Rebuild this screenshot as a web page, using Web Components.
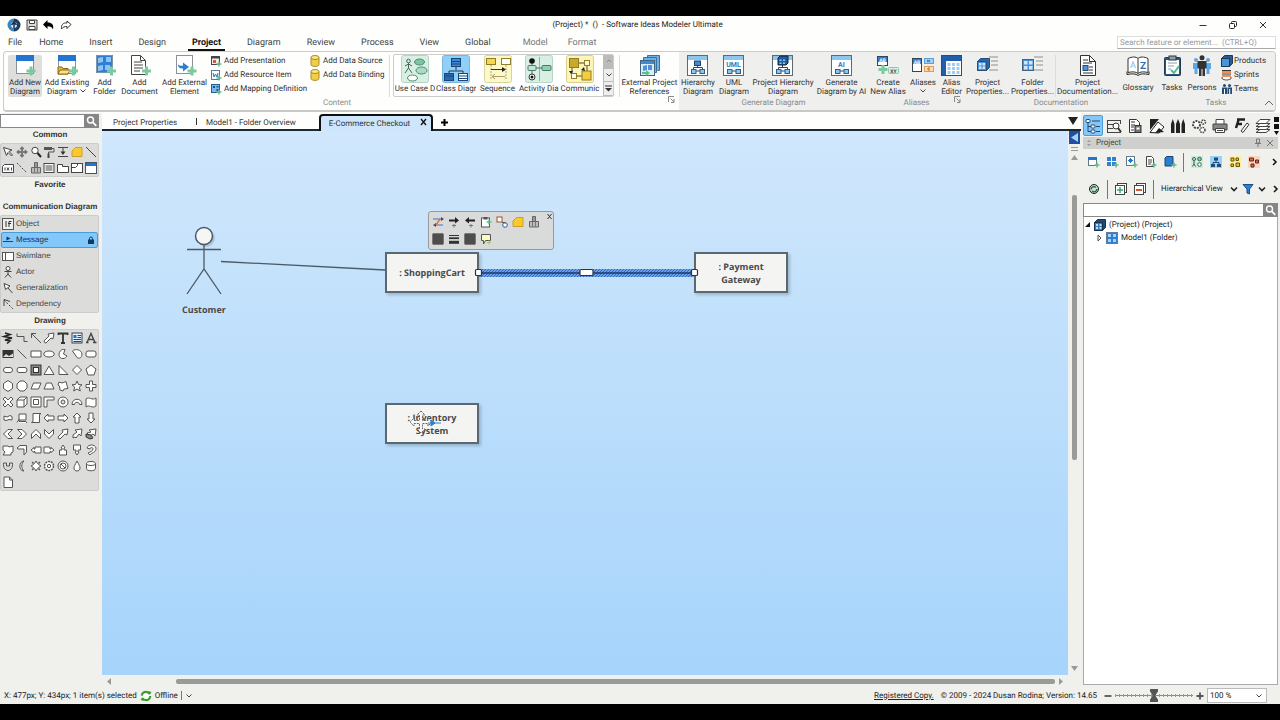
<!DOCTYPE html>
<html lang="en">
<head>
<meta charset="utf-8">
<title>Software Ideas Modeler Ultimate</title>
<style>
html, body { margin: 0; height: 100%; }
body { background: #000; font: 8px/10px Roboto, "Open Sans", sans-serif; color: #333; text-rendering: geometricPrecision; }
</style>
</head>
<body>
<sim-app></sim-app>
<script>
/* ---------- icon library ---------- */
const PLUS = (x, y) => `<path d="M${x} ${y - 4.5}v9M${x - 4.5} ${y}h9" stroke="#7cc9a0" stroke-width="3" fill="none"/>`;
const plus = (x, y) => `<path d="M${x} ${y - 2.5}v5M${x - 2.5} ${y}h5" stroke="#63bd8b" stroke-width="1.5" fill="none"/>`;
const WIN = `<rect x="2.5" y=".5" width="17" height="18" fill="#fff" stroke="#8a9299"/><path d="M2 0h18v6H2z" fill="#2374cf"/>`;
const DGM = `<rect x=".5" y=".5" width="20" height="20" fill="#fff" stroke="#5a6a78"/><path d="M1 1h19v4H1z" fill="#8fc6ee"/>`;
const PAIR = `<path d="M9 16h4" stroke="#345"/><rect x="4.500" y="14.500" width="4.500" height="4" fill="#8fc6ee" stroke="#2c5f8d"/><rect x="13" y="14.500" width="4.500" height="4" fill="#8fc6ee" stroke="#2c5f8d"/>`;
const CUBE = `<path d="M.5 3.500l3-3h8v8l-3 3h-8z" fill="#245c96" stroke="#1e3a55"/><rect x=".5" y="3.500" width="8" height="8" fill="#4a94dc" stroke="#1e3a55"/>`;
const GRID4 = (x, y, s, f) => `<rect x="${x}" y="${y}" width="${s}" height="${s}" fill="${f}"/><path d="M${x + s / 2} ${y}v${s}M${x} ${y + s / 2}h${s}" stroke="#fff" stroke-width="1"/>`;
const DB = `<path d="M1 2.500v7c0 2.500 8 2.500 8 0v-7z" fill="#f0cf45" stroke="#ab8b22"/><ellipse cx="5" cy="2.500" rx="4" ry="2" fill="#fbe88a" stroke="#ab8b22"/>`;
const PROPS = `<path d="M12 2h9M14 6h7M14 10h7M12 15h9" stroke="#8a8f94"/>`;
const I = {
  logo: [14, 14, `<circle cx="7" cy="7" r="6" fill="#e8f1f8"/><path d="M7 .5A6.500 6.500 0 0 1 7 13.500V10a3 3 0 0 0 0-6z" fill="#1f3c60"/><path d="M7 .5A6.500 6.500 0 0 0 7 13.500V10a3 3 0 0 1 0-6z" fill="#3886be"/><path d="M7 4v6M4.500 7L7 4l2.500 3" stroke="#16324f" stroke-width="1.500" fill="none"/>`],
  save: [12, 12, `<path d="M1 1h10v10H1z" fill="#ddd" stroke="#444"/><path d="M3.500 1.500h5v3h-5zM3 7.500h6v3H3z" fill="#fff" stroke="#444"/>`],
  undo: [12, 10, `<path d="M4.500 0v2.500C9 2.500 11 4.500 10 9.500 9 7 7.500 6.200 4.500 6.200V9L0 4.500z" fill="#000"/>`],
  redo: [12, 10, `<path d="M7 1v2C3 2.500 1 5 1.500 9 3 7 4.500 6.500 7 6.500V8.500L11 4.500z" fill="#fff" stroke="#333"/>`],
  wmin: [10, 10, `<path d="M1.500 5.500h7" stroke="#333"/>`],
  wmax: [10, 10, `<rect x="1.500" y="3.500" width="5" height="5" rx="1" fill="none" stroke="#222"/><path d="M3.500 3.500v-1a1 1 0 0 1 1-1h3a1 1 0 0 1 1 1v3a1 1 0 0 1-1 1h-1" fill="none" stroke="#222"/>`],
  wclose: [10, 10, `<path d="M2 2l6 6M8 2L2 8" stroke="#333"/>`],
  search: [13, 13, `<circle cx="5.500" cy="5" r="3" fill="none" stroke="#fff" stroke-width="1.400"/><path d="M7.800 7.300l3.500 3.500" stroke="#fff" stroke-width="1.800"/>`],
  chev: [8, 6, `<path d="M1.500 1.500L4 4l2.500-2.500" fill="none" stroke="#444"/>`],
  chevb: [8, 6, `<path d="M1 1.500L4 4.500l3-3" fill="none" stroke="#222" stroke-width="1.600"/>`],
  more: [5, 8, `<path d="M1 1l3 3-3 3" fill="none" stroke="#111" stroke-width="1.500"/>`],
  collapse: [10, 6, `<path d="M1 5l4-4 4 4" fill="none" stroke="#666"/>`],
  launcher: [7, 7, `<path d="M6 .5H.5V6M2.500 2.500L6 6M6 3v3.500H3" fill="none" stroke="#888"/>`],
  newdiag: [22, 22, WIN + PLUS(17, 16)],
  exist: [22, 22, WIN + `<path d="M2 19v-7h4l1 1.500h5V19z" fill="#e8b93a" stroke="#8c6a12"/><path d="M2 19l2-4h10l-2 4z" fill="#ffe389" stroke="#8c6a12"/>` + PLUS(17.5, 16)],
  folder: [22, 22, `<rect x="2" y="0" width="17" height="18" fill="#2f80d4"/><path d="M2.500.5h16v17h-16z" fill="none" stroke="#7b93a9"/><path d="M4 3l5-1v5l-5 1zM12 2h5v5h-5zM4 11l5-1v5l-5 1zM11 10h5v5h-5z" fill="#8fc3f3"/>` + PLUS(17.5, 16)],
  document: [22, 22, `<path d="M2.500.5h9l5 5v14h-14z" fill="#fff" stroke="#444"/><path d="M11.500.5v5h5" fill="none" stroke="#444"/><path d="M5 7h8M5 10h9M5 13h9M5 16h6" stroke="#444"/>` + PLUS(17.5, 16)],
  external: [22, 22, `<rect x="2.500" y=".5" width="16" height="18" fill="#fff" stroke="#8a9299"/><path d="M4 9.500c2 1.500 3 1.500 5 1v-3l6 4.500-6 4.500v-3c-3 .5-5-1-5-4z" fill="#2a7fd0"/>` + PLUS(18, 16)],
  pres: [10, 10, `<rect x=".5" y=".5" width="8" height="8" fill="#eee" stroke="#444"/><path d="M0 0h9v2.500H0z" fill="#444"/><path d="M2 4h3v3H2z" fill="#d95b32"/>` + plus(8, 8)],
  res: [10, 10, `<rect x=".5" y=".5" width="8" height="9" fill="#fff" stroke="#678"/><path d="M2 3l1 4 1.500-3L6 7l1-4" fill="none" stroke="#2374cf"/>` + plus(8, 8)],
  map: [10, 10, `<rect x=".5" y=".5" width="8" height="8" fill="#7ab8ee" stroke="#245c96"/><path d="M2 2h2v2H2zM5.500 5h2v2h-2zM5.500 2h2v1.500h-2z" fill="#1d4f86"/>` + plus(8, 8)],
  db: [10, 12, DB],
  gUse: [28, 28, `<rect x=".5" y=".5" width="27" height="27" rx="2" fill="#d8efe4" stroke="#b8d4c6"/><circle cx="7.500" cy="6" r="1.800" fill="none" stroke="#465"/><path d="M7.500 8v5M4 11l3.500-2 3.500 2M4 18l3.500-5 3.500 5" fill="none" stroke="#465"/><ellipse cx="18.500" cy="7" rx="5" ry="3" fill="#7cc5a2" stroke="#4b8b6c"/><ellipse cx="20.500" cy="15.500" rx="5.500" ry="3.500" fill="#a9dcc3" stroke="#4b8b6c"/><ellipse cx="11.500" cy="23" rx="5" ry="3" fill="#fff" stroke="#4b8b6c"/>`],
  gClass: [28, 28, `<rect x=".5" y=".5" width="27" height="27" rx="2" fill="#8fd0fb" stroke="#79b6de"/><path d="M14 11v4M7 18v-2h14v2" stroke="#234" fill="none"/><rect x="9.500" y="3.500" width="9" height="8" fill="#3e8ad6" stroke="#1b4777"/><rect x="2.500" y="18.500" width="9" height="7" fill="#2769b5" stroke="#1b4777"/><rect x="16.500" y="18.500" width="9" height="7" fill="#fff" stroke="#1b4777"/><path d="M9.500 6.500h9M9.500 9h9M2.500 21h9M16.500 21h9M16.500 23.500h9" stroke="#1b4777"/>`],
  gSeq: [28, 28, `<rect x=".5" y=".5" width="27" height="27" rx="2" fill="#fdf8c8" stroke="#d9d49c"/><path d="M7 10v15M22 10v15" stroke="#aaa57a" stroke-dasharray="2 1"/><rect x="2.500" y="3.500" width="9" height="6" fill="#f5d84e" stroke="#8f7c24"/><rect x="17.500" y="3.500" width="9" height="6" fill="#fff" stroke="#8f7c24"/><path d="M7 14.500h13" stroke="#333"/><path d="M8 21.500h13" stroke="#a99f6a"/><path d="M18 12l4 2.500-4 2.500z" fill="#222"/><path d="M11 19l-3 2.500 3 2.500" fill="none" stroke="#a99f6a"/>`],
  gAct: [28, 28, `<rect x=".5" y=".5" width="27" height="27" rx="2" fill="#d8efe4" stroke="#b8d4c6"/><path d="M14.500 2v24" stroke="#9ab"/><path d="M7 6v16M7 13h14" stroke="#567" fill="none"/><circle cx="7" cy="6" r="2.800" fill="#111"/><rect x="3" y="10.500" width="8" height="5" rx="1" fill="#bfe6d2" stroke="#4b7b66"/><rect x="17" y="10.500" width="9" height="5" rx="1" fill="#8fd0b0" stroke="#4b7b66"/><circle cx="7" cy="22" r="3" fill="#fff" stroke="#333"/><circle cx="7" cy="22" r="1.500" fill="#111"/>`],
  gCom: [28, 28, `<rect x=".5" y=".5" width="27" height="27" rx="2" fill="#fdf5b4" stroke="#d9cf8c"/><path d="M13 8h6M6 12v7M11 21h5M21 11v5" stroke="#444" fill="none"/><rect x="3.500" y="3.500" width="9" height="9" fill="#c9a92c" stroke="#8f7c24"/><rect x="18.500" y="5.500" width="5" height="5" fill="#fff9cc" stroke="#8f7c24"/><rect x="5.500" y="18.500" width="5" height="5" fill="#fff" stroke="#8f7c24"/><rect x="16" y="16" width="9" height="9" fill="#f3cc3f" stroke="#8f7c24"/><path d="M15 15l3-3 1 4zM3 16l2 3 2-3z" fill="#222"/>`],
  extref: [22, 22, `<path d="M8.500 2.500v-2h12v15h-2M4.500 5v-2.500h13v15h-2" fill="#6fb0e6" stroke="#3d6f9d"/><rect x="1.500" y="5.500" width="14" height="15" fill="#dcedfa" stroke="#44637f"/><path d="M2 6h13v3H2z" fill="#3e8ad6"/><path d="M4 11l4-1v5l-4 1zM9 10h4v5H9z" fill="#4a94dc"/><path d="M3 17h4v-2l4 3-4 3v-2H3z" fill="#63bd8b"/>`],
  hier: [22, 22, DGM + `<path d="M10.500 9v4M6.500 15v-2.500h9V15" fill="none" stroke="#345"/><rect x="7.500" y="6" width="6" height="4.500" fill="#3e8ad6" stroke="#1b4777"/>` + PAIR],
  uml: [22, 22, DGM + PAIR + `<text x="10.500" y="12" text-anchor="middle" font-size="7" font-weight="700" fill="#3a78b4">UML</text>`],
  phd: [22, 22, DGM + `<path d="M10.500 9v4M6.500 15v-2.500h9V15" fill="none" stroke="#345"/><path d="M6 3l2-2h8v7l-2 2H6z" fill="#1f5da5" stroke="#123"/><path d="M7.500 4.500h2v1.500h-2zM11 4.500h2v1.500h-2zM7.500 7.500h2v1.500h-2zM11 7.500h2v1.500h-2z" fill="#8fc6ee"/>` + PAIR],
  ai: [22, 22, DGM + PAIR + `<text x="10.500" y="12" text-anchor="middle" font-size="7" font-weight="700" fill="#3a78b4">AI</text>`],
  alias: [22, 22, `<rect x=".5" y="1.500" width="10" height="9" fill="#fff" stroke="#345"/><path d="M1 2h9v5H1z" fill="#2f80d4"/><text x="5.500" y="6.700" text-anchor="middle" font-size="5" font-weight="700" fill="#fff">AB</text><rect x="11.500" y="12.500" width="10" height="6" rx="1" fill="#d6efe2" stroke="#8bc7a7"/><text x="16.500" y="17.500" text-anchor="middle" font-size="5" font-weight="700" fill="#345">XY</text><path d="M6 10v9M1.500 14.500h9" stroke="#7cc9a0" stroke-width="3"/>`],
  aliases: [22, 22, `<rect x=".5" y="3.500" width="9" height="13" fill="#fff" stroke="#345"/><path d="M1 4h8v5H1z" fill="#2f80d4"/><text x="5" y="8.500" text-anchor="middle" font-size="5" font-weight="700" fill="#fff">AB</text><rect x="12.500" y="3.500" width="9" height="5" fill="#9fd0f6" stroke="#5d9fd6"/><rect x="12.500" y="11.500" width="9" height="5" fill="#fbdcb8" stroke="#e39a52"/><path d="M15 5l3 2M18 5l-3 2" stroke="#3a78b4"/><path d="M18 13h-2v2h2" fill="none" stroke="#c56a1c"/>`],
  aled: [22, 22, `<rect x=".5" y=".5" width="20" height="20" fill="#fff" stroke="#2c4c70"/><path d="M1 1h19v5H1zM1 6h4v14H1z" fill="#1f5fae"/><path d="M6.500 8h3v3h-3zM11 8h3v3h-3zM15.500 8h3v3h-3zM6.500 12h3v3h-3zM11 12h3v3h-3zM15.500 12h3v3h-3zM6.500 16h3v3h-3zM11 16h3v3h-3zM15.500 16h3v3h-3z" fill="#9fcdf3"/>`],
  pprops: [22, 22, PROPS + `<path d="M.5 6.500l3-3h9v9l-3 3h-9z" fill="#2a68aa" stroke="#2b4d70"/><path d="M.5 6.500h9v9h-9z" fill="#4a94dc" stroke="#2b4d70"/><path d="M2 8h2.500v2.500H2zM5.500 8H8v2.500H5.500zM2 11.500h2.500V14H2zM5.500 11.500H8V14H5.500z" fill="#cfe6fa"/>`],
  fprops: [22, 22, PROPS + `<rect x=".5" y="4.500" width="11" height="11" fill="#4a94dc" stroke="#44637f"/><path d="M2 6h3.500v3.500H2zM7 6h3.500v3.500H7zM2 11h3.500v3.500H2zM7 11h3.500v3.500H7z" fill="#cfe6fa"/>`],
  pdoc: [22, 22, `<path d="M3.500.5h9l6 6v14h-15z" fill="#fff" stroke="#333"/><path d="M12.500.5v6h6" fill="none" stroke="#333"/><path d="M6 5h5M6 8h9M12 12h4M12 15h4M6 18h10" stroke="#333"/><rect x="6" y="10.500" width="5" height="5" fill="#4a94dc" stroke="#2b4d70"/>`],
  gloss: [22, 22, `<path d="M1 3.500c4-2 8-2 10 0 2-2 6-2 10 0v14c-4-1-8-1-10 1-2-2-6-2-10-1z" fill="#fff" stroke="#333"/><path d="M11 3.500v15" stroke="#333"/><path d="M0 16.500v3c5-1 9-1 11 1 2-2 6-2 11-1v-3" fill="none" stroke="#222"/><text x="6" y="13" text-anchor="middle" font-size="9" fill="#7fb8e6">A</text><text x="16" y="14" text-anchor="middle" font-size="10" font-weight="700" fill="#2a70b8">Z</text>`],
  tasks: [22, 22, `<rect x="3.500" y="2.500" width="16" height="18" rx="1" fill="#2e567f" stroke="#1d3a58"/><path d="M5 5h13v14H5z" fill="#fff"/><rect x="8" y="1" width="7" height="4" fill="#8ba0b5" stroke="#333"/><path d="M7 8h9M7 11h6M7 14h3" stroke="#8ba0b5"/><path d="M10 15l3 3 5-7" fill="none" stroke="#58b987" stroke-width="2"/>`],
  persons: [22, 22, `<g fill="#5fa6e6"><circle cx="5" cy="5" r="2"/><path d="M2 8h6v6H6.500v5h-3v-5H2z"/><circle cx="17" cy="5" r="2"/><path d="M14 8h6v6h-1.500v5h-3v-5H14z"/></g><circle cx="11" cy="2.800" r="2.500" fill="#333"/><path d="M6.500 6h9v7H14v8h-2.500v-7h-1v7H8v-8H6.500z" fill="#333"/>`],
  cube: [12, 12, CUBE],
  sprints: [12, 12, `<path d="M1 1.500h9M1 5h9" stroke="#333"/><path d="M1 2h9v2.500H1zM1 6h9v2H1z" fill="#ef8f57"/><path d="M1 8v1.500c3 2 6 2 9 0V8" fill="#fff" stroke="#444"/>`],
  teams: [12, 12, `<g fill="#234a73"><circle cx="3.500" cy="2.500" r="1.500"/><path d="M1 4.500h5V11H1z"/><circle cx="8.500" cy="2.500" r="1.500"/><path d="M6.500 4.500h4.500V11H6.500z"/></g><path d="M3.500 6v5M8.700 6v5" stroke="#fff"/>`],
  /* palette: common */
  cursor: [12, 12, `<path d="M1.500 1.500l3 8 1.500-3 3.500 3.500 1-1L7 5.500l3-1.500z" fill="#fff" stroke="#444"/>`],
  move: [12, 12, `<path d="M6 .5l2 2.500H6.500v2.500H9V4l2.500 2L9 8V6.500H6.500V9H8l-2 2.500L4 9h1.500V6.500H3V8L.5 6 3 4v1.500h2.500V3H4z" fill="#777" stroke="#555" stroke-width=".5"/>`],
  zoomi: [12, 12, `<circle cx="5" cy="4.500" r="3.200" fill="#fff" stroke="#444"/><path d="M7.500 7l3.500 4" stroke="#222" stroke-width="2"/>`],
  roller: [12, 12, `<path d="M1 1h8v3H1z" fill="#555"/><path d="M9 2.500h2v3.500H5.500V8" fill="none" stroke="#555"/><path d="M4.500 7.500h2V12h-2z" fill="#444"/>`],
  space: [12, 12, `<path d="M1 1.500h10M1 10.500h10M6 2v6" stroke="#444"/><path d="M3.500 5.500L6 9l2.500-3.500z" fill="#333"/>`],
  note: [12, 12, `<path d="M1 10.500V5l3.500-3.500H11v9z" fill="#fcc92d" stroke="#caa02a"/>`],
  line: [12, 12, `<path d="M1 1l10 10" stroke="#444"/>`],
  nameb: [12, 12, `<path d="M.5 10.500v-6l2-2h9v8z" fill="#fff" stroke="#444"/><path d="M3 5.500v3M5 5.500l2 3M7 5.500l-2 3M9.500 5.500v3" stroke="#444"/>`],
  dots: [12, 12, `<path d="M1 1l10 10" stroke="#444" stroke-dasharray="2 1.500"/>`],
  stamp: [12, 12, `<path d="M1.500 5.500h9V11h-9z" fill="#bbb" stroke="#666"/><path d="M4.500.5h3v5h-3z" fill="#999" stroke="#666"/><path d="M4.500 6v5M7.500 6v5" stroke="#777"/>`],
  list: [12, 12, `<rect x="1" y="1.500" width="10" height="9" fill="#fff" stroke="#444"/><path d="M2.500 4h7M2.500 6h7M2.500 8h7" stroke="#444"/>`],
  fold: [12, 12, `<path d="M.5 10.500v-8h5v2h6v6z" fill="#fff" stroke="#444"/>`],
  frame: [12, 12, `<rect x=".5" y="1.500" width="11" height="9" fill="#fff" stroke="#444"/><path d="M.5 5.500h4l2-2v-2" fill="none" stroke="#444"/>`],
  winb: [12, 12, `<rect x=".5" y=".5" width="11" height="11" fill="#fff" stroke="#456"/><path d="M1 1h10v3H1z" fill="#2374cf"/>`],
  obj: [12, 12, `<rect x=".5" y=".5" width="11" height="11" fill="#eee" stroke="#555"/><path d="M4 3v6M7 9V3.500h2.500M6 5.500h3" stroke="#333" fill="none"/>`],
  msg: [12, 12, `<path d="M1 7.500h10" stroke="#246"/><path d="M4.500 2.500L8.500 4.500l-4 2z" fill="#123a66"/>`],
  swim: [12, 12, `<rect x=".5" y="2.500" width="11" height="8" fill="#fff" stroke="#555"/><path d="M3.500 2.500v8" stroke="#555"/>`],
  actor: [12, 12, `<circle cx="6" cy="2.500" r="2" fill="#fff" stroke="#444"/><path d="M6 4.500V8M2.500 5.500h7M3 11.500L6 8l3 3.500" fill="none" stroke="#444"/>`],
  gen: [12, 12, `<path d="M2 1.500l1.500 6L8 4zM6 6l4.500 5" fill="#fff" stroke="#444"/>`],
  dep: [12, 12, `<path d="M2 8V1.500L8 3.500" fill="none" stroke="#444"/><path d="M2 2l9 9" stroke="#444" stroke-dasharray="2 1.500"/>`],
  lock: [8, 8, `<path d="M2.500 4V2.500a1.500 1.500 0 0 1 3 0V4" fill="none" stroke="#123a66"/><path d="M1 3.500h6V8H1z" fill="#123a66"/>`],
  /* right panel tabs */
  tTree: [16, 16, `<rect x="1" y="1.500" width="4" height="3" rx="1" fill="#fff" stroke="#234a73"/><path d="M3 4.500v9h3M3 8.500h3M7 3h8M11 8.500h4M11 13.500h4" fill="none" stroke="#234a73"/><rect x="6" y="7" width="4" height="3" rx="1" fill="#fff" stroke="#234a73"/><rect x="6" y="12" width="4" height="3" rx="1" fill="#fff" stroke="#234a73"/>`],
  tFind: [16, 16, `<path d="M1 2.500h14M1 6.500h6M1 10.500h6M1 14.500h14M1.500 2v12M14.500 2v4" stroke="#444"/><circle cx="10" cy="8" r="3" fill="#fff" stroke="#333"/><path d="M12 10l3 4" stroke="#333" stroke-width="2"/>`],
  tDoc: [16, 16, `<path d="M2.500 1.500h7l3 3v10h-10z" fill="#fff" stroke="#333"/><path d="M4 4h4M4 7h4M4 9h3M4 12h3" stroke="#333"/><rect x="8" y="7.500" width="6" height="7" fill="#777" stroke="#333"/><path d="M9.500 9.500h3v2h-3z" fill="#fff"/>`],
  tBw: [16, 16, `<path d="M1 1h9L1 12z" fill="#222"/><path d="M1 14.500L9 4l6 5-5 6z" fill="#fff" stroke="#222"/><path d="M6 15l4-5 5 4z" fill="#222"/>`],
  tPens: [16, 16, `<path d="M1 6l1.800-5L4.500 6v9H1zM6 6l2-5 2 5v9H6zM11.500 6l1.800-5L15 6v9h-3.500z" fill="#222"/>`],
  tGear: [16, 16, `<circle cx="5.500" cy="6.500" r="3.500" fill="#fff" stroke="#444" stroke-width="2" stroke-dasharray="2 1"/><circle cx="12.500" cy="4" r="2" fill="#fff" stroke="#444" stroke-width="1.500" stroke-dasharray="1.500 .8"/><circle cx="11.500" cy="12" r="2.500" fill="#fff" stroke="#444" stroke-width="1.500" stroke-dasharray="1.500 .8"/>`],
  tPrint: [16, 16, `<path d="M4 6V1.500h8V6" fill="#fff" stroke="#444"/><path d="M1 6h14v6H1z" fill="#888" stroke="#444"/><path d="M3.500 10.500h9v4h-9z" fill="#fff" stroke="#444"/><path d="M5 12.500h6" stroke="#444"/>`],
  tFmt: [16, 16, `<path d="M3 1.500h8M2 10L4.500 2M3 6h5" stroke="#222" stroke-width="2.500" fill="none"/><path d="M7 13l6-8 2 1.500-6 8z" fill="#fff" stroke="#333"/>`],
  tLayers: [16, 16, `<g fill="#fff" stroke="#444"><path d="M1 14.500l4-3h10l-4 3z"/><path d="M1 11.500l4-3h10l-4 3z"/><path d="M1 8.500l4-3h10l-4 3z"/><path d="M1 5.500l4-4h10l-4 4z"/></g>`],
  pin: [8, 10, `<path d="M2.500 1h3v4h-3zM1 5.500h6M4 5.500V9" fill="none" stroke="#777"/>`],
  px: [8, 8, `<path d="M1 1l6 6M7 1L1 7" stroke="#777"/>`],
  sort: [6, 8, `<path d="M1 3l2-2 2 2zM1 5l2 2 2-2z" fill="#999"/>`],
  rWin: [12, 12, `<rect x=".5" y="1.500" width="8" height="8" fill="#fff" stroke="#678"/><path d="M0 1h9v3H0z" fill="#2374cf"/>` + plus(9, 9)],
  rFold: [12, 12, GRID4(0, 1, 9, "#2f80d4") + plus(9, 9)],
  rStar: [12, 12, `<rect x=".5" y=".5" width="8" height="9" fill="#fff" stroke="#678"/><path d="M4.500 2v5M2 4.500h5M3 3l3 3M6 3L3 6" stroke="#2374cf"/>` + plus(9, 9)],
  rDoc: [12, 12, `<path d="M1.500.5h5l2 2v8h-7z" fill="#fff" stroke="#444"/><path d="M3 4h4M3 6h4M3 8h3" stroke="#444"/>` + plus(9, 9)],
  rCube: [12, 12, `<path d="M1 2l1.500-1.500h6.500v8L8 10H1z" fill="#2a7fd0" stroke="#1b4777"/>` + plus(10, 9)],
  rUse: [12, 12, `<rect x="0" y="0" width="12" height="12" fill="#cfeadc"/><circle cx="3" cy="3" r="1.500" fill="none" stroke="#364"/><path d="M3 4.500V8M1.500 10.500L3 8l1.500 2.500" stroke="#364" fill="none"/><circle cx="8.500" cy="3" r="1.800" fill="#8cc" stroke="#364"/><circle cx="8.500" cy="8.500" r="1.800" fill="#fff" stroke="#364"/>`],
  rCls: [12, 12, `<rect x="0" y="0" width="12" height="12" fill="#9ad3fa"/><path d="M4 1.500h4v3H4zM1 8h4v3H1zM7 8h4v3H7z" fill="#234a73"/><path d="M6 4v3M3 8V6.500h6V8" stroke="#234a73" fill="none"/>`],
  rCom: [12, 12, `<rect x="0" y="0" width="12" height="12" fill="#fbeea0"/><path d="M2 2h3v3H2zM7 2h2.500v2.500H7zM2 8h2.500v2.500H2zM7 7h3.500v3.500H7z" fill="#e8c030" stroke="#655510"/>`],
  rBpm: [12, 12, `<rect x="0" y="0" width="12" height="12" fill="#fbd6bd"/><path d="M1.500 2h4v3h-4zM7.500 4h3v3h-3zM3 8h3v3H3z" fill="#d86a4a" stroke="#622"/>`],
  refresh: [12, 12, `<circle cx="6" cy="6" r="4.500" fill="#bfe3cd" stroke="#222"/><path d="M3 6.500a3 3 0 0 1 5-2M9 6a3 3 0 0 1-5 2" fill="none" stroke="#2a5b3d" stroke-width="1.300"/>`],
  expand: [12, 12, `<rect x="2.500" y=".5" width="9" height="9" fill="#fff" stroke="#444"/><rect x=".5" y="2.500" width="9" height="9" fill="#fff" stroke="#444"/><path d="M5 4v6M2 7h6" stroke="#3da56d" stroke-width="1.500"/>`],
  shrink: [12, 12, `<rect x="2.500" y=".5" width="9" height="9" fill="#fff" stroke="#444"/><rect x=".5" y="2.500" width="9" height="9" fill="#fff" stroke="#444"/><path d="M2 7h6" stroke="#d6542f" stroke-width="2"/>`],
  funnel: [12, 12, `<path d="M1 1.500h10L7.500 6v5L5 10V6z" fill="#2f80d4" stroke="#1d4f86"/>`],
  project: [12, 12, `<path d="M.5 3.500l3-3h8v8l-3 3h-8z" fill="#1f4a78" stroke="#16324f"/><rect x=".5" y="3.500" width="8" height="8" fill="#3779bb" stroke="#16324f"/><path d="M2 5h2v2H2zM5.500 5h2v2h-2zM2 8h2v2H2zM5.500 8h2v2h-2z" fill="#bfe0fa"/>`],
  model: [12, 12, `<rect x=".5" y=".5" width="11" height="11" fill="#2f80d4" stroke="#5a7fa3"/><path d="M2 2h3v3H2zM7 2h3v3H7zM2 7h3v3H2zM7 7h3v3H7z" fill="#a8d2f8"/>`],
  online: [12, 12, `<circle cx="6" cy="6" r="4.200" fill="#fff" stroke="#3f9b2d" stroke-width="2.200" stroke-dasharray="10.500 2.700"/><path d="M8 1l3.500 1L9.500 5zM4 11L.5 10l2-3z" fill="#3f9b2d"/>`],
  minus: [8, 8, `<path d="M.5 4h7" stroke="#555" stroke-width="1.800"/>`],
  pluss: [8, 8, `<path d="M.5 4h7M4 .5v7" stroke="#555" stroke-width="1.800"/>`],
  plusb: [9, 9, `<path d="M1 4.500h7M4.500 1v7" stroke="#000" stroke-width="2"/>`],
  /* quick toolbar */
  qFlip: [12, 12, `<path d="M1 3h8M11 9H3" stroke="#4472b8"/><path d="M9 1l3 2-3 2zM4 7L1 9l3 2z" fill="#446"/><path d="M8 3L4 9" stroke="#e8703a" stroke-width="1.500"/>`],
  qRight: [12, 12, `<path d="M1 3.500h6v-2.500l4 3.500-4 3V5.500H1z" fill="#222"/><path d="M4 9.500h4M6 8v3.500" stroke="#777"/>`],
  qLeft: [12, 12, `<path d="M11 3.500H5v-2.500L1 4.500l4 3V5.500h6z" fill="#222"/><path d="M5 9.500h4M7 8v3.500" stroke="#777"/>`],
  qClip: [12, 12, `<rect x="1.500" y="2" width="8" height="9" fill="#fff" stroke="#555"/><path d="M3.500 1h4v2.500h-4z" fill="#555"/>` + plus(9, 6)],
  qConv: [12, 12, `<rect x="1" y="1" width="5" height="5" fill="#fff" stroke="#a4502a"/><circle cx="9" cy="9" r="2.300" fill="#fff" stroke="#2a5da8"/><path d="M6 6.500h3v1" fill="none" stroke="#555"/>`],
  qFill: [12, 12, `<rect x=".5" y=".5" width="11" height="11" rx="1" fill="#4d4d4d" stroke="#777"/>`],
  qLines: [12, 12, `<path d="M1 2.500h10" stroke="#333"/><path d="M1 5.200h10" stroke="#333" stroke-width="1.800"/><path d="M1 9.300h10" stroke="#333" stroke-width="3"/>`],
  qTalk: [12, 12, `<path d="M1.500 1.500h9v6h-5L3.500 11V7.500h-2z" fill="#fcfbc4" stroke="#555"/><path d="M9 7.500v4M7 9.500h4" stroke="#9cc96a"/>`]
};
/* drawing palette shapes on a 12 x 12 grid, in display order */
const S = d => `<path d="${d}" fill="#fff" stroke="#555"/>`;
const N = d => `<path d="${d}" fill="none" stroke="#555"/>`;
const DRAW = [
  ["Scribble", `<path d="M3 1l5 1.500-6 2L10 6 3 8l5 1-3 2.500" fill="none" stroke="#222" stroke-width="1.600"/>`],
  ["Polyline", N("M1 1.500v3h7v5h3.500")], ["Arrow line", N("M11 11L1.500 1.500M1.500 6V1.500H6")],
  ["Block arrow", S("M2 11L1 9l5-5-1-2 6-1-1 6-2-1-5 5z")],
  ["Text", `<path d="M1.500 3V1.500h9V3M6 2v9M4 11h4" fill="none" stroke="#333" stroke-width="1.800"/>`],
  ["Rich text", `<rect x="1" y="1" width="10" height="10" fill="#e4f0fb" stroke="#345"/><path d="M2.500 3h3v3h-3z" fill="#2374cf"/><path d="M6.500 3.500H10M6.500 5.500H10M2.500 7.500H10M2.500 9.500H10" stroke="#345"/>`],
  ["Word art", `<path d="M2 10.500L6 1.500l4 9M3.500 7.500h5M1 10.500h2.500M8 10.500h3.500" fill="none" stroke="#444" stroke-width="1.400"/>`],
  ["Image", `<rect x=".5" y="2" width="11" height="8" fill="#333"/><path d="M1 9l3-3 3 2 4-2.500V9z" fill="#ddd"/>`],
  ["Line", N("M1.500 1.500l9 9")], ["Rectangle", S("M1 3h10v6H1z")], ["Ellipse", S("M6 3c7 0 7 6 0 6S-1 3 6 3z")],
  ["Pie", S("M8 1.500C1 0 0 11 6 10.500c2 0 3-1 4-2.500L6.500 6z")], ["Chord", S("M1.500 3c3-3 9-1 9.500 3 0 4-3 5-5 3.500z")],
  ["Rounded", S("M3 3h6q2 0 2 2v2q0 2-2 2H3q-2 0-2-2V5q0-2 2-2z")],
  ["Pill", S("M4 3.500h4a2.500 2.500 0 0 1 0 5H4a2.500 2.500 0 0 1 0-5z")], ["Terminator", S("M3 3.500h6q2 0 2 2.500t-2 2.500H3Q1 8.500 1 6t2-2.500z")],
  ["Bevel", `<rect x="1" y="1" width="10" height="10" fill="#888" stroke="#333"/><rect x="3.500" y="3.500" width="5" height="5" fill="#fff" stroke="#333"/>`],
  ["Triangle", S("M6 2l5 8.500H1z")], ["Right triangle", S("M2 1.500l9 9H2z")], ["Diamond", S("M6 1.500L10.500 6 6 10.500 1.500 6z")],
  ["Pentagon", S("M6 1l5 4-2 6H3L1 5z")], ["Hexagon", S("M6 .5l4.500 3v5l-4.500 3-4.500-3v-5z")],
  ["Octagon", S("M4 1h4l3 3v4l-3 3H4L1 8V4z")], ["Parallelogram", S("M3.500 3H11L8.500 9H1z")], ["Trapezoid", S("M3.500 3h5L11 9H1z")],
  ["Blob", S("M2 2l3 1 4-1.500 1 4 1 3-4 .5-1 2-3-1-.5-4-1.500-1z")], ["Star", S("M6 1l1.500 3.500 3.500.3-2.700 2.300 1 3.900L6 9l-3.300 2 1-3.900L1 4.800l3.500-.3z")],
  ["Plus", S("M4.500 1h3v3.500H11v3H7.500V11h-3V7.500H1v-3h3.500z")], ["Cross", S("M1 3l2-2 3 3 3-3 2 2-3 3 3 3-2 2-3-3-3 3-2-2 3-3z")],
  ["Cube", S("M1 4l3-3h7v7l-3 3H1z") + N("M1 4h7v7M8 4l3-3")], ["Frame", S("M1 1h10v10H1z") + S("M3.500 3.500h5v5h-5z")],
  ["Corner", S("M1 1h10v3H4v7H1z")], ["Ring", `<circle cx="6" cy="6" r="5" fill="#fff" stroke="#555"/><circle cx="6" cy="6" r="2" fill="#ddd" stroke="#555"/>`],
  ["Arc", S("M1 8.500c0-7 10-7 10 0H8.500c0-3-5-3-5 0z")], ["Wave", S("M1 3c3-3 6 2 10-1v8c-4 3-7-2-10 1z")],
  ["Ribbon", S("M2 4l3 1 3-1.500 2 1V8L7 7.500 4 8.500 2 8z")], ["Banner", S("M3 2h7v6H3zM1 10.500l2-3v2h7l1 1.500")],
  ["Scroll", S("M3 1.500h8l-1.500 1v8H1.500L3 9.500z")], ["Left", S("M1 6l4-4v2h6v4H5v2z")], ["Right", S("M11 6L7 2v2H1v4h6v2z")],
  ["Up", S("M6 1l4 4H8v6H4V5H2z")], ["Down", S("M6 11L2 7h2V1h4v6h2z")], ["Chevron left", S("M6 1.500L1.500 6 6 10.500h4.500L6 6l4.500-4.500z")],
  ["Chevron right", S("M1.500 1.500L6 6l-4.500 4.500H6L10.500 6 6 1.500z")], ["Chevron up", S("M6 1.500l4.500 4.500v4.500L6 6l-4.500 4.500V6z")],
  ["Chevron down", S("M6 10.500L1.500 6V1.500L6 6l4.500-4.500V6z")], ["Arrow NE", S("M2 11L1 9l5-5-1-2 6-1-1 6-2-1-5 5z")],
  ["Wide arrow", S("M2 7l4-3-2-2 7-1-1 7-2-2-3 4-1-1-2 1z")], ["Shaded arrow", S("M2 5l4-1-2-2 7-1-1 7-2-2-3 2z") + `<path d="M1 6l5 1 2 3-3 1-4-2z" fill="#888" stroke="#333"/>`],
  ["Notch", S("M1 2h5l1 1 4-1v6l-2 1v2H1l2-3-2-2z")], ["Bend", S("M1 4l3-2.500h6.500V8L8 11V5H2z")],
  ["Callout left", S("M1 6l3-2.500V5h1V3h6v6H5V7.500H4v1z")], ["Callout right", S("M11 6L8 3.500V5H7V3H1v6h6V7.500h1v1z")],
  ["Callout up", S("M6 1l2 3H7v2h2.500v5h-7V6H5V4H4z")], ["Callout down", S("M6 11l2-3H7V6h2.500V1h-7v5H5v2H4z")],
  ["Curl", S("M2 4c1-4 8-4 9 0 0 5-4 4-6 7L3 9c2-1 5-2 5-4S5 3 5 5z")], ["Smile", N("M1.500 3c-1 10 10 10 9 0h-3v3h-3V3z")],
  ["Moon", S("M8 1C3 1 2 11 8 11 5 9 5 3 8 1z")], ["Burst", S("M2 2l2.500 1.500L6 1l1.500 2.500L10 2 8.500 4.500 11 6 8.500 7.500 10 10 7.500 8.500 6 11 4.500 8.500 2 10l1.500-2.500L1 6l2.500-1.500z")],
  ["Gear", `<circle cx="6" cy="6" r="4.500" fill="#fff" stroke="#555" stroke-width="1.500" stroke-dasharray="2 .8"/><circle cx="6" cy="6" r="1.700" fill="#fff" stroke="#555"/>`],
  ["No sign", `<circle cx="6" cy="6" r="5" fill="#fff" stroke="#555"/><circle cx="6" cy="6" r="3" fill="#fff" stroke="#555"/><path d="M4 4l4 4" stroke="#555"/>`],
  ["Drop", S("M6 1c2 4 3 5 3 7 0 4-6 4-6 0 0-2 1-3 3-7z")], ["Cylinder", S("M1.500 3.500v5c0 3 9 3 9 0v-5z") + S("M6 1.500c6 0 6 4 0 4s-6-4 0-4z")],
  ["Page", S("M2 1h5.500L10.500 4v7.500H2z") + N("M7.500 1v3h3")]
];
DRAW.forEach(([n, s]) => { I["d:" + n] = [12, 12, s]; });

const define = (name, css, html) => customElements.define(name, class extends HTMLElement {
  connectedCallback() {
    if (this.shadowRoot) return;
    const root = this.attachShadow({ mode: "open" });
    root.innerHTML = `<style>*{box-sizing:border-box;text-rendering:inherit}button{font:inherit;color:inherit;background:none;border:0;padding:0;margin:0}${css}</style>` +
      (typeof html === "function" ? html(this) : html);
  }
});

define("sim-icon", `:host{display:inline-block;flex:none;line-height:0}svg{display:block;overflow:visible;font-family:Roboto,sans-serif}`,
  el => { const [w, h, s] = I[el.getAttribute("name")]; return `<svg width="${w}" height="${h}" viewBox="0 0 ${w} ${h}" aria-hidden="true">${s}</svg>`; });

/* ---------- title and menu ---------- */
define("sim-titlebar", `:host{display:grid;grid-template-columns:1fr auto 1fr;align-items:center;height:17px;padding:0 12px 0 7px;background:#fefefc;color:#222}
  .quick{display:flex;gap:5px;align-items:center}.win{display:flex;gap:20px;justify-content:flex-end}button{display:flex}h1{font:inherit;margin:0;white-space:pre}`,
  `<div class="quick"><sim-icon name="logo"></sim-icon><button aria-label="Save"><sim-icon name="save"></sim-icon></button><button aria-label="Undo"><sim-icon name="undo"></sim-icon></button><button aria-label="Redo"><sim-icon name="redo"></sim-icon></button></div>
  <h1>(Project) *  ()  - Software Ideas Modeler Ultimate</h1>
  <div class="win"><button aria-label="Minimize"><sim-icon name="wmin"></sim-icon></button><button aria-label="Restore"><sim-icon name="wmax"></sim-icon></button><button aria-label="Close"><sim-icon name="wclose"></sim-icon></button></div>`);

define("sim-menu", `:host{display:flex;align-items:center;justify-content:space-between;height:18px;padding:0 4px 0 8px;background:#fefefc;font-size:9px;line-height:12px}
  nav{display:flex;gap:26px;padding-top:2px}a{color:#444;text-decoration:none}a:first-child{margin-right:-9px}
  a[aria-current]{color:#111;font-weight:700;box-shadow:0 2px #111;margin:0 -4px;padding:0 4px}a.dim{color:#777}a.dim:last-child{margin-left:-6px}a.dim:nth-last-child(2){margin-left:6px}
  input{width:159px;height:13px;border:1px solid #ddd;border-bottom-color:#aaa;background:#fff;font:8px/10px Roboto,sans-serif;padding:0 2px}input::placeholder{color:#999;opacity:1}`,
  `<nav>${["File", "Home", "Insert", "Design", "Project", "Diagram", "Review", "Process", "View", "Global", "Model", "Format"].map(t => `<a href="#${t}"${t === "Project" ? ' aria-current="page"' : ""}${t === "Model" || t === "Format" ? ' class="dim"' : ""}>${t}</a>`).join("")}</nav>
  <input type="search" aria-label="Search feature" placeholder="Search feature or element...  (CTRL+Q)">`);

/* ---------- ribbon ---------- */
define("ribbon-button", `:host{display:block;flex:none}button{display:flex;flex-direction:column;align-items:center;width:100%;height:42px}
  :host([active]) button{background:#dededc;border-radius:2px}span{display:flex;align-items:center;justify-content:center;height:18px;margin-top:1px;line-height:9px;text-align:center;white-space:nowrap}`,
  el => `<button><sim-icon name="${el.getAttribute("icon")}"></sim-icon><span><div><slot></slot></div></span></button>`);
define("ribbon-item", `:host{display:block}button{display:flex;align-items:center;gap:3px;height:14px;white-space:nowrap}sim-icon{width:10px;height:12px;display:flex;align-items:center}`,
  el => `<button><sim-icon name="${el.getAttribute("icon")}"></sim-icon><slot></slot></button>`);
define("ribbon-group", `:host{display:flex;flex-direction:column;border-right:1px solid #ddd;margin-right:-1px;flex:none;position:relative}
  .row{display:flex;height:45px;padding-top:3px}.cap{text-align:center;color:#8a8a8a;height:12px;line-height:12px}
  .launch{position:absolute;right:4px;bottom:4px}`,
  el => `<div class="row"><slot></slot></div><div class="cap">${el.getAttribute("caption") || ""}</div>${el.hasAttribute("launcher") ? '<button class="launch" aria-label="More options"><sim-icon name="launcher"></sim-icon></button>' : ""}`);
define("ribbon-gallery", `:host{display:flex;width:221px;height:43px;border:1px solid #ccc;border-radius:2px;background:#fff;overflow:hidden}
  .list{display:flex;flex:1;justify-content:space-between;padding:0 3px 0 1px}.list button{width:40px;display:flex;flex-direction:column;align-items:center;overflow:hidden;white-space:nowrap;line-height:12px}
  .nav{display:flex;flex-direction:column;width:10px;background:#eee;border-left:1px solid #bbb}.nav button{flex:1;display:grid;place-items:center;border-bottom:1px solid #bbb}.nav button:first-child{background:#bbb}`,
  `<div class="list">${[["gUse", "Use Case D"], ["gClass", "Class Diagr"], ["gSeq", "Sequence"], ["gAct", "Activity Dia"], ["gCom", "Communic"]].map(([i, t]) => `<button><sim-icon name="${i}"></sim-icon>${t}</button>`).join("")}</div>
  <div class="nav"><button aria-label="Up"><svg width="6" height="4"><path d="M1 3l2-2 2 2" fill="none" stroke="#888"/></svg></button><button aria-label="Down"><sim-icon name="chev"></sim-icon></button><button aria-label="Expand"><svg width="7" height="7"><path d="M0 1h7" stroke="#333"/><path d="M0 3h7L3.500 6.500z" fill="#333"/></svg></button></div>`);
define("sim-ribbon", `:host{display:flex;height:61px;margin:0 4px 0 3px;border:1px solid #ccc;border-bottom:2px solid #c8c8c6;border-radius:4px;background:#fefefc;position:relative;overflow:hidden}
  ribbon-group.grey{background:#efefed}.lead{padding-left:4px}.nb{border:0;margin:0}.col{display:flex;flex-direction:column;margin:-1px 0 0 4px}.w95{width:95px}.w73{width:73px}
  .w25{width:25px}.w27{width:27px}.w30{width:30px}.w34{width:34px}.w38{width:38px}.w40{width:40px}.w45{width:45px}.w50{width:50px}.w53{width:53px}.w60{width:60px}.w64{width:64px}
  .last{flex:1}.up{position:absolute;right:1px;bottom:1px}ribbon-gallery{margin:-1px 5px 0 3px}.vs{border-left:1px solid #ddd;margin-left:6px}.sub{border-left:1px solid #ddd}
  .content{margin-top:-12px;padding-left:116px;line-height:12px;color:#8a8a8a;position:relative}`,
  `<ribbon-group class="lead nb">
    <ribbon-button class="w34" active icon="newdiag">Add New<br>Diagram</ribbon-button><ribbon-button class="w50" icon="exist">Add Existing<br>Diagram <sim-icon name="chev"></sim-icon></ribbon-button>
    <ribbon-button class="w25" icon="folder">Add<br>Folder</ribbon-button><ribbon-button class="w45" icon="document">Add<br>Document</ribbon-button><ribbon-button class="w45" icon="external">Add External<br>Element</ribbon-button></ribbon-group>
  <div><ribbon-group class="nb"><div class="col w95"><ribbon-item icon="pres">Add Presentation</ribbon-item><ribbon-item icon="res">Add Resource Item</ribbon-item><ribbon-item icon="map">Add Mapping Definition</ribbon-item></div>
    <div class="col w73"><ribbon-item icon="db">Add Data Source</ribbon-item><ribbon-item icon="db">Add Data Binding</ribbon-item></div></ribbon-group><div class="content">Content</div></div>
  <ribbon-group class="nb"><div class="vs"></div><ribbon-gallery></ribbon-gallery></ribbon-group>
  <ribbon-group class="nb" launcher><ribbon-button class="w60 sub" icon="extref">External Project<br>References</ribbon-button></ribbon-group>
  <ribbon-group class="grey" caption="Generate Diagram"><ribbon-button class="w38" icon="hier">Hierarchy<br>Diagram</ribbon-button><ribbon-button class="w34" icon="uml">UML<br>Diagram</ribbon-button><ribbon-button class="w64" icon="phd">Project Hierarchy<br>Diagram</ribbon-button><ribbon-button class="w53" icon="ai">Generate<br>Diagram by AI</ribbon-button></ribbon-group>
  <ribbon-group class="grey" caption="Aliases" launcher><ribbon-button class="w40" icon="alias">Create<br>New Alias</ribbon-button><ribbon-button class="w30" icon="aliases">Aliases<br><sim-icon name="chev"></sim-icon></ribbon-button><ribbon-button class="w27" icon="aled">Alias<br>Editor</ribbon-button></ribbon-group>
  <ribbon-group class="grey" caption="Documentation"><ribbon-button class="w45" icon="pprops">Project<br>Properties...</ribbon-button><ribbon-button class="w45" icon="fprops">Folder<br>Properties...</ribbon-button><ribbon-button class="w64 sub" icon="pdoc">Project<br>Documentation...</ribbon-button><ribbon-button class="w38" icon="gloss">Glossary</ribbon-button></ribbon-group>
  <ribbon-group class="grey last" caption="Tasks"><ribbon-button class="w30" icon="tasks">Tasks</ribbon-button><ribbon-button class="w30" icon="persons">Persons</ribbon-button><div class="col"><ribbon-item icon="cube">Products</ribbon-item><ribbon-item icon="sprints">Sprints</ribbon-item><ribbon-item icon="teams">Teams</ribbon-item></div></ribbon-group>
  <button class="up" aria-label="Collapse ribbon"><sim-icon name="collapse"></sim-icon></button>`);

/* ---------- shared search box ---------- */
define("search-box", `:host{display:flex;height:14px;border:1px solid #888;background:#fff}input{flex:1;min-width:0;border:0;background:none;padding:0 2px;font:inherit;outline:0}button{width:14px;background:#858585;display:grid;place-items:center}`,
  el => `<input type="text" aria-label="${el.getAttribute("label")}"><button aria-label="Search"><sim-icon name="search"></sim-icon></button>`);

/* ---------- toolbox ---------- */
define("tool-box", `:host{display:flex;flex-direction:column;width:102px;background:#f0f0ec;padding:1px 2px 0 0;font-family:"Liberation Sans",Arial,sans-serif;flex:none}
  search-box{margin-right:1px}h2{font-size:8px;line-height:10px;margin:0;text-align:center;color:#333}
  .box{background:#dcdcda;border:1px solid #ccc;border-radius:2px;margin:3px 1px 3px 0}.grid{display:grid;grid-template-columns:repeat(7,1fr);grid-auto-rows:16px}.grid button{display:grid;place-items:center}
  .list button{display:flex;align-items:center;gap:2px;width:100%;height:16px;padding:0 3px 0 1px;color:#444}.list button.on{background:#83c8fa;border:1px solid #4d9bd6;padding:0 2px 0 0;border-radius:2px;color:#234}.on sim-icon:last-child{margin-left:auto}
  .t1{margin-top:2px}.t2{margin-top:12px}`,
  `<search-box label="Search tools"></search-box><h2 class="t1">Common</h2>
  <div class="box grid">${["cursor", "move", "zoomi", "roller", "space", "note", "line", "nameb", "dots", "stamp", "list", "fold", "frame", "winb"].map(n => `<button aria-label="${n}"><sim-icon name="${n}"></sim-icon></button>`).join("")}</div>
  <h2>Favorite</h2><h2 class="t2">Communication Diagram</h2>
  <div class="box list">${[["obj", "Object"], ["msg", "Message"], ["swim", "Swimlane"], ["actor", "Actor"], ["gen", "Generalization"], ["dep", "Dependency"]].map(([i, t]) => `<button${i === "msg" ? ' class="on"' : ""}><sim-icon name="${i}"></sim-icon>${t}${i === "msg" ? '<sim-icon name="lock"></sim-icon>' : ""}</button>`).join("")}</div>
  <h2>Drawing</h2>
  <div class="box grid">${DRAW.map(([n]) => `<button aria-label="${n}"><sim-icon name="d:${n}"></sim-icon></button>`).join("")}</div>`);

/* ---------- document area ---------- */
define("doc-tabs", `:host{display:flex;height:18px;align-items:stretch;background:#fefefc;border-bottom:2px solid #1c2733;padding-left:11px;line-height:16px;padding-top:1px}
  button{white-space:nowrap;padding-top:1px}.bar{align-self:center;width:1px;height:7px;background:#333;margin:0 9px 0 19px}
  .tab{display:flex;gap:10px;align-items:center;background:#cde6fc;border:2px solid #111;border-bottom:0;border-radius:4px 4px 0 0;padding:0 4px 2px 8px;margin:0 7px -2px 23px;height:18px;position:relative}
  .drop{margin-left:auto;margin-right:3px}sim-icon{vertical-align:middle}`,
  `<button>Project Properties</button><span class="bar"></span><button>Model1 - Folder Overview</button><div class="tab"><button>E-Commerce Checkout</button><button aria-label="Close tab"><svg width="7" height="8"><path d="M1 1l5 6M6 1L1 7" stroke="#111" stroke-width="1.300"/></svg></button></div><button aria-label="New tab"><sim-icon name="plusb"></sim-icon></button><button class="drop" aria-label="All tabs"><svg width="10" height="8"><path d="M0 0h10L5 8z" fill="#222"/></svg></button>`);

define("diagram-node", `:host{position:absolute;display:flex;align-items:center;justify-content:center;width:94px;height:41px;box-sizing:border-box;background:#f4f4f3;border:2px solid #5a6874;box-shadow:2px 2px 3px #0003;font:700 9px/13px "Open Sans","Noto Sans",sans-serif;color:#4a4a4a;text-align:center}`, `<div><slot></slot></div>`);

define("quick-bar", `:host{position:absolute;box-sizing:border-box;width:126px;height:39px;background:#d9dbdb;border:1px solid #999;border-radius:3px;padding:1px 0 0 1px}
  .g{display:grid;grid-template-columns:repeat(7,16px);grid-auto-rows:17px}.g button{display:grid;place-items:center}.x{position:absolute;right:0;top:0}`,
  `<div class="g">${["qFlip", "qRight", "qLeft", "qClip", "qConv", "note", "stamp", "qFill", "qLines", "qFill", "qTalk"].map(n => `<button aria-label="${n}"><sim-icon name="${n}"></sim-icon></button>`).join("")}</div><button class="x" aria-label="Close"><svg width="7" height="8"><path d="M1.500 2l4 5M5.500 2l-4 5" stroke="#333"/></svg></button>`);

define("diagram-canvas", `:host{display:block;position:relative;overflow:hidden;background:linear-gradient(#d0e7fc,#a6d4fb)}
  svg{position:absolute;left:0;top:0;width:100%;height:100%}.cart{left:283px;top:121px}.pay{left:592px;top:121px}.inv{left:283px;top:272px}quick-bar{left:326px;top:80px}
  .name{position:absolute;left:80px;top:172px;font:700 9px/13px "Open Sans","Noto Sans",sans-serif;color:#4a4a4a}`,
  `<svg><defs><pattern id="h" width="3" height="3" patternUnits="userSpaceOnUse"><rect width="3" height="3" fill="#6b9fe8"/><path d="M0 3L3 0" stroke="#3567bb"/></pattern></defs>
    <circle cx="104" cy="107" r="9" fill="#0002"/><circle cx="102" cy="105" r="8.500" fill="#f6f6f5" stroke="#4b5a66" stroke-width="1.500"/><path d="M102 114v24M85 118.500h34M85 163l17-25 17 25M119 130.500l164 8.500" fill="none" stroke="#4b5a66" stroke-width="1.300"/>
    <rect x="377" y="138" width="216" height="8" fill="url(#h)"/><path d="M377 142h216" stroke="#1b3a72" stroke-width="1.500"/></svg>
  <div class="name">Customer</div>
  <diagram-node class="cart">: ShoppingCart</diagram-node><diagram-node class="pay">: Payment<br>Gateway</diagram-node><diagram-node class="inv">: Inventory<br>System</diagram-node>
  <svg><g fill="#fff" stroke="#333" stroke-width="1.200"><rect x="373.500" y="138.500" width="6" height="6" rx="1"/><rect x="478" y="138.500" width="13" height="6" rx="1"/><rect x="589.500" y="138.500" width="6" height="6" rx="1"/></g>
    <path d="M319 280l4 4h-2.500v5.500h5.500V287l4 4-4 4v-2.500h-5.500v5.500h2.500l-4 4-4-4h2.500v-5.500H312V295l-4-4 4-4v2.500h5.500V284H315z" fill="#f8f8f8" stroke="#666" stroke-dasharray="2 1"/><path d="M326 292h13" stroke="#2a7fd0"/><path d="M329 289l4 3-4 3z" fill="#2a7fd0" stroke="#2a7fd0"/></svg>
  <quick-bar></quick-bar>`);

define("sim-document", `:host{display:grid;flex:1;min-width:0;grid-template:18px 1fr 12px / 1fr 13px;background:#f0f0ec}doc-tabs{grid-column:1/3}
  .v{display:flex;flex-direction:column;align-items:center}.v i{width:5px;background:#9a9a98;border-radius:2px;flex:263;margin-top:35px}.v::after{content:"";flex:205}
  .b{width:11px;height:13px;background:#1f4fa0;display:grid;place-items:center;margin-bottom:3px}.v svg{flex:none}.v .dn{order:2;margin-bottom:4px}.up{margin-top:3px}
  .h{display:flex;align-items:center;padding:0 5px}.h i{height:5px;background:#9a9a98;border-radius:2px;flex:1;margin:0 4px 0 65px}.h svg{flex:none}`,
  `<doc-tabs></doc-tabs><diagram-canvas></diagram-canvas>
  <div class="v"><button class="b" aria-label="Collapse"><svg width="7" height="9"><path d="M7 0v9L0 4.500z" fill="#a9d0f5"/></svg></button><svg width="7" height="5"><path d="M0 .5h7M0 3.500h7" stroke="#999"/></svg><svg class="up" width="7" height="5"><path d="M0 5h7L3.500 0z" fill="#999"/></svg><i></i><svg class="dn" width="7" height="5"><path d="M0 0h7L3.500 5z" fill="#999"/></svg></div>
  <div class="h"><svg width="4" height="7"><path d="M4 0v7L0 3.500z" fill="#999"/></svg><i></i><svg width="4" height="7"><path d="M0 0v7l4-3.500z" fill="#999"/></svg></div>`);

/* ---------- project panel ---------- */
define("project-panel", `:host{display:flex;flex-direction:column;width:199px;flex:none;box-sizing:border-box;background:#f0f0ec;padding:1px 2px 2px 2px}
  .tabs{display:flex;height:23px;align-items:center;justify-content:space-between;margin-right:-1px}.tabs button{display:grid;place-items:center;width:20px;height:21px}.tabs .on{background:#84c7f8;border:1px solid #4d9bd6;border-radius:2px}.tabs .end{width:5px}
  header{display:flex;align-items:center;gap:4px;height:12px;background:#cfcfcd;padding:0 4px 0 3px}header b{font-weight:400;flex:1;color:#444}
  .bar{display:flex;align-items:center;gap:7px;padding:0 1px 0 5px}.bar button{display:flex}.one{height:26px}.two{height:28px}.set{display:flex;gap:7px;align-items:center}.tight{gap:4px}.sep{width:1px;height:19px;background:#777;flex:none}.more{margin-left:auto}
  select{appearance:none;border:0;background:none;font:inherit;color:#222;padding:0;margin:0;width:62px;flex:none}
  ul{list-style:none;margin:0;padding:0}.tree{flex:1;background:#fff;border:1px solid #aaa;border-top:0;padding-top:1px}.tree div{display:flex;align-items:center;gap:3px;height:13px;white-space:nowrap;color:#222}.tree ul div{padding-left:12px}`,
  `<div class="tabs">${["tTree", "tFind", "tDoc", "tBw", "tPens", "tGear", "tPrint", "tFmt", "tLayers"].map((n, i) => `<button aria-label="${n}"${i ? "" : ' class="on"'}><sim-icon name="${n}"></sim-icon></button>`).join("")}<button class="end" aria-label="More panels"><svg width="5" height="18"><path d="M0 0h5v5H0zM0 7h5v5H0zM0 14h5l-2.500 4z" fill="#111"/></svg></button></div>
  <header><sim-icon name="sort"></sim-icon><b>Project</b><sim-icon name="pin"></sim-icon><sim-icon name="px"></sim-icon></header>
  <div class="bar one"><div class="set">${["rWin", "rFold", "rStar", "rDoc", "rCube"].map(n => `<button aria-label="${n}"><sim-icon name="${n}"></sim-icon></button>`).join("")}</div><span class="sep"></span><div class="set">${["rUse", "rCls", "rCom", "rBpm"].map(n => `<button aria-label="${n}"><sim-icon name="${n}"></sim-icon></button>`).join("")}</div><button class="more" aria-label="More"><sim-icon name="more"></sim-icon></button></div>
  <div class="bar two"><button aria-label="Refresh"><sim-icon name="refresh"></sim-icon></button><span class="sep"></span><button aria-label="Expand all"><sim-icon name="expand"></sim-icon></button><button aria-label="Collapse all"><sim-icon name="shrink"></sim-icon></button><span class="sep"></span><select aria-label="View"><option>Hierarchical View</option></select><div class="set tight"><sim-icon name="chevb"></sim-icon><button aria-label="Filter"><sim-icon name="funnel"></sim-icon></button><sim-icon name="chevb"></sim-icon></div><button class="more" aria-label="More"><sim-icon name="more"></sim-icon></button></div>
  <search-box label="Search project"></search-box>
  <ul class="tree"><li><div><svg width="7" height="7"><path d="M6 1v5H1z" fill="#111"/></svg><sim-icon name="project"></sim-icon>(Project) (Project)</div><ul><li><div><svg width="7" height="8"><path d="M2 1l3 3-3 3z" fill="#fff" stroke="#555"/></svg><sim-icon name="model"></sim-icon>Model1 (Folder)</div></li></ul></li></ul>`);

/* ---------- status bar ---------- */
define("status-bar", `:host{display:flex;align-items:center;height:17px;background:#f0f0ec;padding:0 13px 0 4px;color:#222}
  .l,.r{display:flex;align-items:center;white-space:nowrap}.l{gap:3px;flex:1}.r{gap:7px}a{color:inherit}.bar{width:1px;height:9px;background:#777}button{display:flex}
  .zoom{display:flex;align-items:center;gap:3px}input{appearance:none;width:78px;height:13px;margin:0;background:repeating-linear-gradient(90deg,#999 0 1px,transparent 1px 4px) center/100% 3px no-repeat,linear-gradient(#888,#888) center/100% 1px no-repeat}
  input::-webkit-slider-thumb{appearance:none;width:8px;height:13px;background:#555;clip-path:polygon(0 0,100% 0,100% 20%,65% 50%,100% 80%,100% 100%,0 100%,0 80%,35% 50%,0 20%)}
  .sel{display:grid;width:60px;height:15px;border:1px solid #bbb;background:#fff;align-items:center}.sel>*{grid-area:1/1}select{appearance:none;border:0;background:none;font:inherit;color:inherit;padding:0 2px;margin:0}.sel sim-icon{justify-self:end;margin-right:3px}`,
  `<div class="l"><span>X: 477px; Y: 434px; 1 item(s) selected</span><sim-icon name="online"></sim-icon><span>Offline</span><span class="bar"></span><button aria-label="Connection"><sim-icon name="chev"></sim-icon></button></div>
  <div class="r"><a href="#license">Registered Copy.</a><span>© 2009 - 2024 Dusan Rodina; Version: 14.65</span><div class="zoom"><button aria-label="Zoom out"><sim-icon name="minus"></sim-icon></button><input type="range" aria-label="Zoom" min="0" max="100" value="50"><button aria-label="Zoom in"><sim-icon name="pluss"></sim-icon></button><div class="sel"><select aria-label="Zoom level"><option>100 %</option></select><sim-icon name="chev"></sim-icon></div></div></div>`);

define("sim-app", `:host{display:flex;flex-direction:column;min-height:100vh;padding:16px 0;background:#000;box-sizing:border-box}
  .body{display:flex;flex:1;background:#fefefc;padding-top:1px}sim-menu,sim-titlebar,sim-ribbon{flex:none}.top{background:#fefefc}`,
  `<div class="top"><sim-titlebar></sim-titlebar><sim-menu></sim-menu><sim-ribbon></sim-ribbon></div>
  <div class="body"><tool-box></tool-box><sim-document></sim-document><project-panel></project-panel></div><status-bar></status-bar>`);
</script>
</body>
</html>
